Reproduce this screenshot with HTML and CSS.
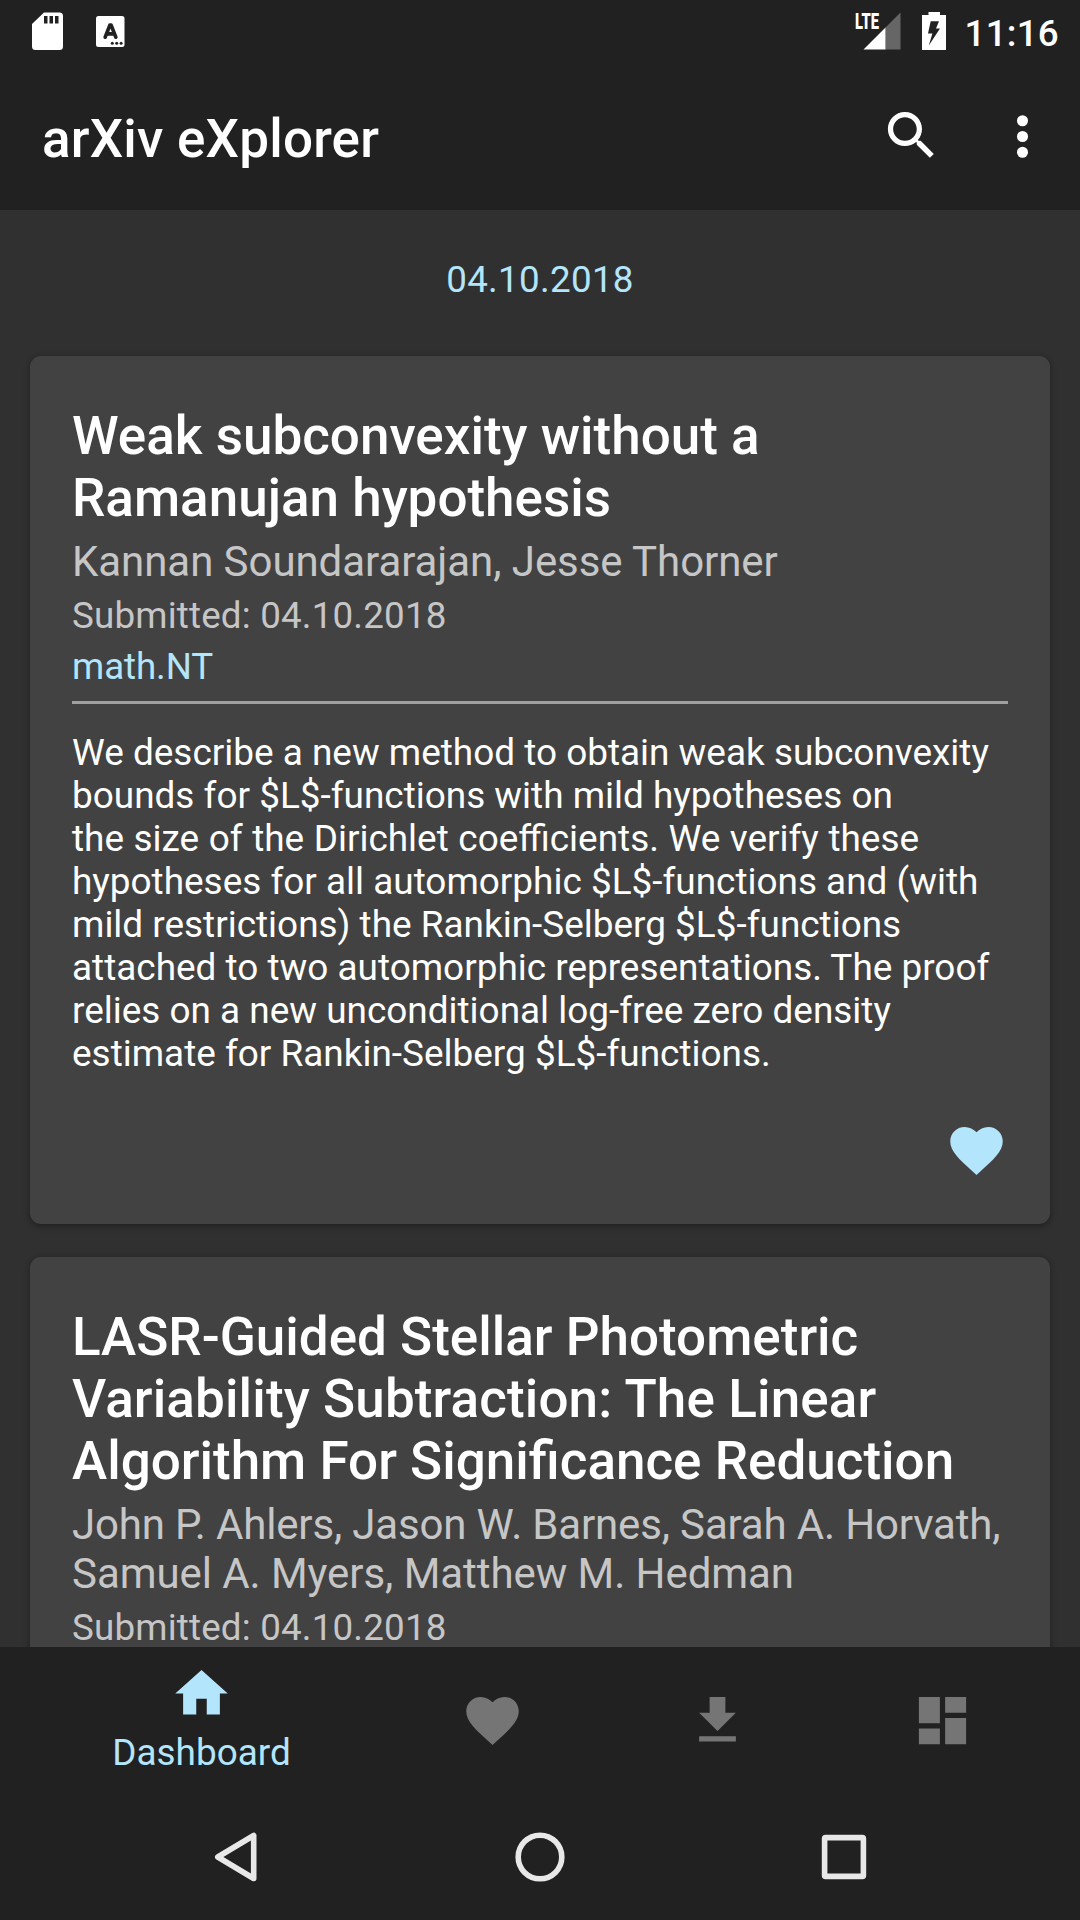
FILE: index.html
```html
<!DOCTYPE html>
<html lang="en">
<head>
<meta charset="utf-8">
<title>arXiv eXplorer</title>
<link rel="stylesheet" href="styles.css">
</head>
<body>
<div class="screen">
  <header class="status-bar">
    <div class="status-left">
      <svg class="sd-icon" width="31" height="39" viewBox="0 0 31 39"><path fill="#fff" fill-rule="evenodd" d="M12 .5H27.500q3.500 0 3.500 3.500V34.500q0 3.500-3.500 3.500H3.500Q0 38 0 34.500V12zM12 4v7.500h3.500V4zM17.500 4v7.500H21V4zM23 4v7.500h3.500V4z"/></svg>
      <svg class="keyboard-icon" width="29" height="31" viewBox="0 0 29 31"><rect width="28.500" height="31" rx="2.500" fill="#fff"/><path d="M9.200 21.200 13.900 9.100h1.200l4.700 12.100M10.800 17.800h7.400" fill="none" stroke="#212121" stroke-width="3.700" stroke-linecap="round" stroke-linejoin="round"/><g fill="#212121"><circle cx="16.300" cy="27.300" r="1.500"/><circle cx="20.700" cy="27.300" r="1.500"/><circle cx="25.100" cy="27.300" r="1.500"/></g></svg>
    </div>
    <div class="status-right">
      <svg class="signal-icon" width="46" height="38" viewBox="0 0 46 38"><path fill="#666" d="M45.500.5V37.500h-15V15.500z"/><path fill="#fff" d="M30.500 15.500v22H8.500z"/><text class="lte" x="0" y="17.200" textLength="24" lengthAdjust="spacingAndGlyphs">LTE</text></svg>
      <svg class="battery-icon" width="25" height="38" viewBox="0 0 25 38"><path fill="#fff" fill-rule="evenodd" d="M6.500 0h11.500v3h6v35H0V3h6.500zM8.700 9.300 6 21.500h4.400L6.800 33.500 18 16.500h-4l3-7.200z"/></svg>
      <span class="clock">11:16</span>
    </div>
  </header>

  <div class="app-bar">
    <h1 class="app-title">arXiv eXplorer</h1>
    <div class="actions">
      <svg class="icon search" viewBox="0 0 24 24"><path d="M15.500 14h-.79l-.28-.27C15.410 12.590 16 11.110 16 9.500 16 5.910 13.090 3 9.500 3S3 5.910 3 9.500 5.910 16 9.500 16c1.610 0 3.090-.59 4.230-1.570l.27.28v.79l5 4.990L20.490 19l-4.990-5zm-6 0C7.010 14 5 11.990 5 9.500S7.010 5 9.500 5 14 7.010 14 9.500 11.990 14 9.500 14z"/></svg>
      <svg class="icon" viewBox="0 0 24 24"><circle cx="12" cy="6" r="2.100"/><circle cx="12" cy="12" r="2.100"/><circle cx="12" cy="18" r="2.100"/></svg>
    </div>
  </div>

  <main class="feed">
    <div class="feed-date">04.10.2018</div>
    <article class="card">
      <h2 class="title">Weak subconvexity without a<br>Ramanujan hypothesis</h2>
      <p class="authors">Kannan Soundararajan, Jesse Thorner</p>
      <p class="submitted">Submitted: 04.10.2018</p>
      <p class="category">math.NT</p>
      <hr class="divider">
      <p class="abstract">We describe a new method to obtain weak subconvexity<br>bounds for $L$-functions with mild hypotheses on<br><span class="wide">the size of the Dirichlet coefficients. We verify these</span><br>hypotheses for all automorphic $L$-functions and (with<br>mild restrictions) the Rankin-Selberg $L$-functions<br>attached to two automorphic representations. The proof<br>relies on a new unconditional log-free zero density<br>estimate for Rankin-Selberg $L$-functions.</p>
      <div class="card-actions">
        <svg class="icon accent" viewBox="0 0 24 24"><path d="M12 21.350l-1.450-1.320C5.400 15.360 2 12.280 2 8.500 2 5.420 4.420 3 7.500 3c1.740 0 3.410.81 4.500 2.090C13.090 3.810 14.760 3 16.500 3 19.580 3 22 5.420 22 8.500c0 3.780-3.400 6.860-8.550 11.540L12 21.350z"/></svg>
      </div>
    </article>
    <article class="card">
      <h2 class="title">LASR-Guided Stellar Photometric<br><span class="loose">Variability Subtraction: The Linear</span><br>Algorithm For Significance Reduction</h2>
      <p class="authors"><span class="tight">John P. Ahlers, Jason W. Barnes, Sarah A. Horvath,</span><br>Samuel A. Myers, Matthew M. Hedman</p>
      <p class="submitted">Submitted: 04.10.2018</p>
    </article>
  </main>

  <nav class="tabs">
    <div class="tab active">
      <svg class="icon" viewBox="0 0 24 24"><path d="M10 20v-6h4v6h5v-8h3L12 3 2 12h3v8z"/></svg>
      <span class="tab-label">Dashboard</span>
    </div>
    <div class="tab"><svg class="icon" viewBox="0 0 24 24"><path d="M12 21.350l-1.450-1.320C5.400 15.360 2 12.280 2 8.500 2 5.420 4.420 3 7.500 3c1.740 0 3.410.81 4.500 2.090C13.090 3.810 14.760 3 16.500 3 19.580 3 22 5.420 22 8.500c0 3.780-3.400 6.860-8.550 11.540L12 21.350z"/></svg></div>
    <div class="tab"><svg class="icon" viewBox="0 0 24 24"><path d="M19 9h-4V3H9v6H5l7 7 7-7zM5 18v2h14v-2H5z"/></svg></div>
    <div class="tab"><svg class="icon" viewBox="0 0 24 24"><path d="M3 13h8V3H3v10zm0 8h8v-6H3v6zm10 0h8V11h-8v10zm0-18v6h8V3h-8z"/></svg></div>
  </nav>

  <footer class="system-nav">
    <svg width="52" height="52" viewBox="0 0 52 52"><path d="M7.800 26 43.700 4.500v43z"/></svg>
    <svg width="52" height="52" viewBox="0 0 52 52"><circle cx="26" cy="26" r="21.800"/></svg>
    <svg width="52" height="52" viewBox="0 0 52 52"><rect x="6.600" y="6.600" width="38.800" height="38.800" rx="1"/></svg>
  </footer>
</div>
</body>
</html>
```
FILE: styles.css
```css
* {
  box-sizing: border-box;
  margin: 0;
  padding: 0;
}

body {
  background: #303030;
  font-family: Roboto, "Noto Sans", sans-serif;
  color: #fff;
}

.screen {
  width: 1080px;
  height: 1920px;
  overflow: hidden;
  display: flex;
  flex-direction: column;
}

svg {
  display: block;
  flex: none;
}

.icon {
  width: 63px;
  height: 63px;
  fill: currentColor;
}

.status-bar {
  flex: none;
  height: 63px;
  background: #212121;
  display: flex;
  justify-content: space-between;
  padding: 12px 21px 0 32px;
}

.status-left,
.status-right {
  display: flex;
  align-items: flex-start;
}

.keyboard-icon {
  margin: 4px 0 0 33px;
}

.signal-icon {
  overflow: visible;
}

.battery-icon {
  margin-left: 21px;
}

.lte {
  font-size: 22.5px;
  font-weight: 900;
  fill: #fff;
}

.clock {
  margin-left: 18px;
  font-size: 36.75px;
  line-height: 43px;
  font-weight: 500;
  letter-spacing: 0.25px;
}

.app-bar {
  flex: none;
  height: 147px;
  background: #212121;
  display: flex;
  align-items: flex-start;
  justify-content: space-between;
  padding: 42px 26px 0 42px;
}

.app-title,
.title {
  font-size: 53px;
  line-height: 62px;
  font-weight: 500;
  white-space: nowrap;
}

.app-title {
  padding-top: 3px;
  letter-spacing: 0.2px;
}

.loose {
  letter-spacing: 0.13px;
}

.actions {
  display: flex;
  gap: 48px;
}

.search {
  margin-top: -1px;
}

.feed {
  flex: 1;
  min-height: 0;
  overflow: hidden;
  padding: 48px 30px 0;
}

.feed-date {
  font-size: 36.75px;
  line-height: 43px;
  letter-spacing: 0.3px;
  text-align: center;
  color: #b3e5fc;
  margin-bottom: 55px;
}

.card {
  background: #424242;
  border-radius: 11px;
  padding: 49px 42px 42px;
  margin-bottom: 33px;
  box-shadow: 0 3px 6px rgba(0, 0, 0, 0.24), 0 0 5px rgba(0, 0, 0, 0.14);
}

.authors {
  margin-top: 8px;
  font-size: 42px;
  line-height: 49px;
  letter-spacing: -0.06px;
  color: #c6c6c6;
  white-space: nowrap;
}

.tight {
  letter-spacing: -0.16px;
}

.submitted,
.category {
  margin-top: 8px;
  font-size: 36.75px;
  line-height: 43px;
  color: #c6c6c6;
}

.submitted {
  letter-spacing: 0.18px;
}

.category {
  color: #b3e5fc;
  letter-spacing: -0.1px;
}

.divider {
  height: 3px;
  border: 0;
  margin: 13px 0 27px;
  background: #a0a0a0;
}

.abstract {
  font-size: 36.93px;
  line-height: 43px;
  white-space: nowrap;
}

.wide {
  word-spacing: 0.4px;
}

.card-actions {
  display: flex;
  justify-content: flex-end;
  margin-top: 44px;
}

.accent {
  color: #b3e5fc;
}

.tabs {
  flex: none;
  height: 147px;
  background: #212121;
  display: flex;
  padding: 0 25px 0 23px;
  color: #757575;
}

.tab {
  width: 225px;
  padding-top: 42px;
  display: flex;
  flex-direction: column;
  align-items: center;
}

.tab.active {
  width: 357px;
  padding-top: 15px;
  color: #b3e5fc;
}

.tab-label {
  margin-top: 6px;
  font-size: 36.9px;
  line-height: 43px;
}

.system-nav {
  flex: none;
  height: 126px;
  background: #212121;
  display: flex;
  justify-content: center;
  align-items: center;
  gap: 252px;
}

.system-nav svg {
  fill: none;
  stroke: #e8e8e8;
  stroke-width: 5.6;
  stroke-linejoin: round;
}
```
